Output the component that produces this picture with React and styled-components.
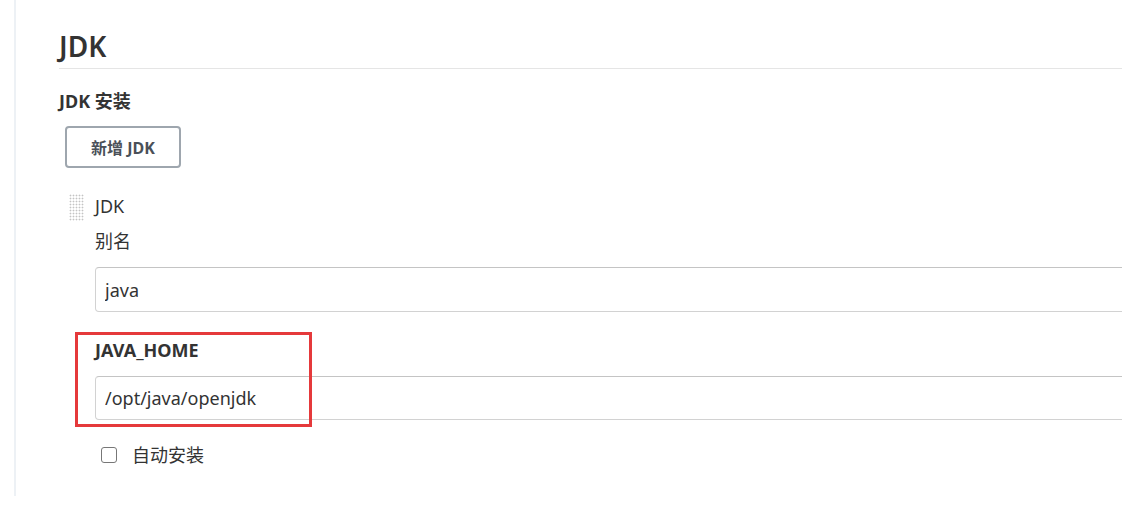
import React from 'react';
import styled, { createGlobalStyle } from 'styled-components';

const GlobalStyle = createGlobalStyle`
  html, body {
    margin: 0;
    padding: 0;
    background: #fff;
  }
  body {
    font-family: "Noto Sans", "Noto Sans CJK SC", sans-serif;
    color: #333;
  }
`;

const Page = styled.div`
  display: flex;
  width: 1122px;
  height: 508px;
  overflow: hidden;
  background: #fff;
`;

const Sidebar = styled.div`
  width: 14px;
  height: 496px;
  border-right: 2px solid #edf1f5;
  flex-shrink: 0;
`;

const Main = styled.div`
  flex: 1;
  min-width: 0;
  padding-left: 43px;
`;

const Heading = styled.h2`
  margin: 0;
  padding: 30px 0 6px 0;
  font-size: 28px;
  line-height: 32px;
  font-weight: 600;
  color: #333;
  border-bottom: 1px solid #e5e5e5;
`;

const SectionLabel = styled.div`
  margin-top: 21px;
  font-size: 18px;
  line-height: 22px;
  font-weight: 700;
  color: #333;
`;

const AddButton = styled.button`
  display: block;
  margin: 14px 0 0 6px;
  width: 116px;
  height: 42px;
  border: 2px solid #9ea6ae;
  border-radius: 4px;
  background: #fff;
  font-family: inherit;
  font-size: 16px;
  font-weight: 700;
  color: #4a5058;
`;

const Item = styled.div`
  display: flex;
  gap: 11px;
  margin-top: 26px;
`;

const Handle = styled.div`
  width: 15px;
  height: 27px;
  margin-left: 10px;
  flex-shrink: 0;
  background-image: radial-gradient(circle, #c4c4c4 0.8px, transparent 1.1px);
  background-size: 3px 3px;
`;

const Fields = styled.div`
  flex: 1;
  min-width: 0;
  margin-right: -40px;
`;

const ItemTitle = styled.div`
  font-size: 18px;
  line-height: 22px;
  margin-top: 1px;
`;

const Field = styled.div`
  position: relative;
  margin-top: ${p => p.$gap}px;
`;

const FieldLabel = styled.div`
  font-size: 18px;
  line-height: 22px;
  font-weight: ${p => (p.$bold ? 700 : 400)};
  color: #333;
`;

const TextInput = styled.input`
  display: block;
  box-sizing: border-box;
  width: 100%;
  height: ${p => p.$h}px;
  margin-top: 15px;
  padding: 0 9px;
  border: 1px solid #d2d2d2;
  border-top-color: #c4c4c4;
  border-radius: 4px;
  background: #fff;
  font-family: inherit;
  font-size: 18px;
  color: #333;
  outline: none;
`;

const Highlight = styled.div`
  position: absolute;
  left: -20px;
  top: -7px;
  width: 237px;
  height: 95px;
  box-sizing: border-box;
  border: 3px solid #e5393b;
  pointer-events: none;
`;

const CheckRow = styled.label`
  display: flex;
  align-items: center;
  gap: 15px;
  margin-top: 24px;
  padding-left: 6px;
  font-size: 18px;
  line-height: 22px;
  color: #333;
`;

const CheckBox = styled.input`
  appearance: none;
  margin: 0;
  width: 16px;
  height: 16px;
  border: 1.5px solid #777;
  border-radius: 3px;
  background: #fff;
`;

export default function App() {
  return (
    <>
      <GlobalStyle />
      <Page>
        <Sidebar />
        <Main>
          <Heading>JDK</Heading>
          <SectionLabel>JDK 安装</SectionLabel>
          <AddButton type="button">新增 JDK</AddButton>
          <Item>
            <Handle />
            <Fields>
              <ItemTitle>JDK</ItemTitle>
              <Field $gap={13}>
                <FieldLabel>别名</FieldLabel>
                <TextInput $h={45} defaultValue="java" readOnly />
              </Field>
              <Field $gap={27}>
                <Highlight />
                <FieldLabel $bold>JAVA_HOME</FieldLabel>
                <TextInput $h={44} defaultValue="/opt/java/openjdk" readOnly />
              </Field>
              <CheckRow>
                <CheckBox type="checkbox" />
                自动安装
              </CheckRow>
            </Fields>
          </Item>
        </Main>
      </Page>
    </>
  );
}
